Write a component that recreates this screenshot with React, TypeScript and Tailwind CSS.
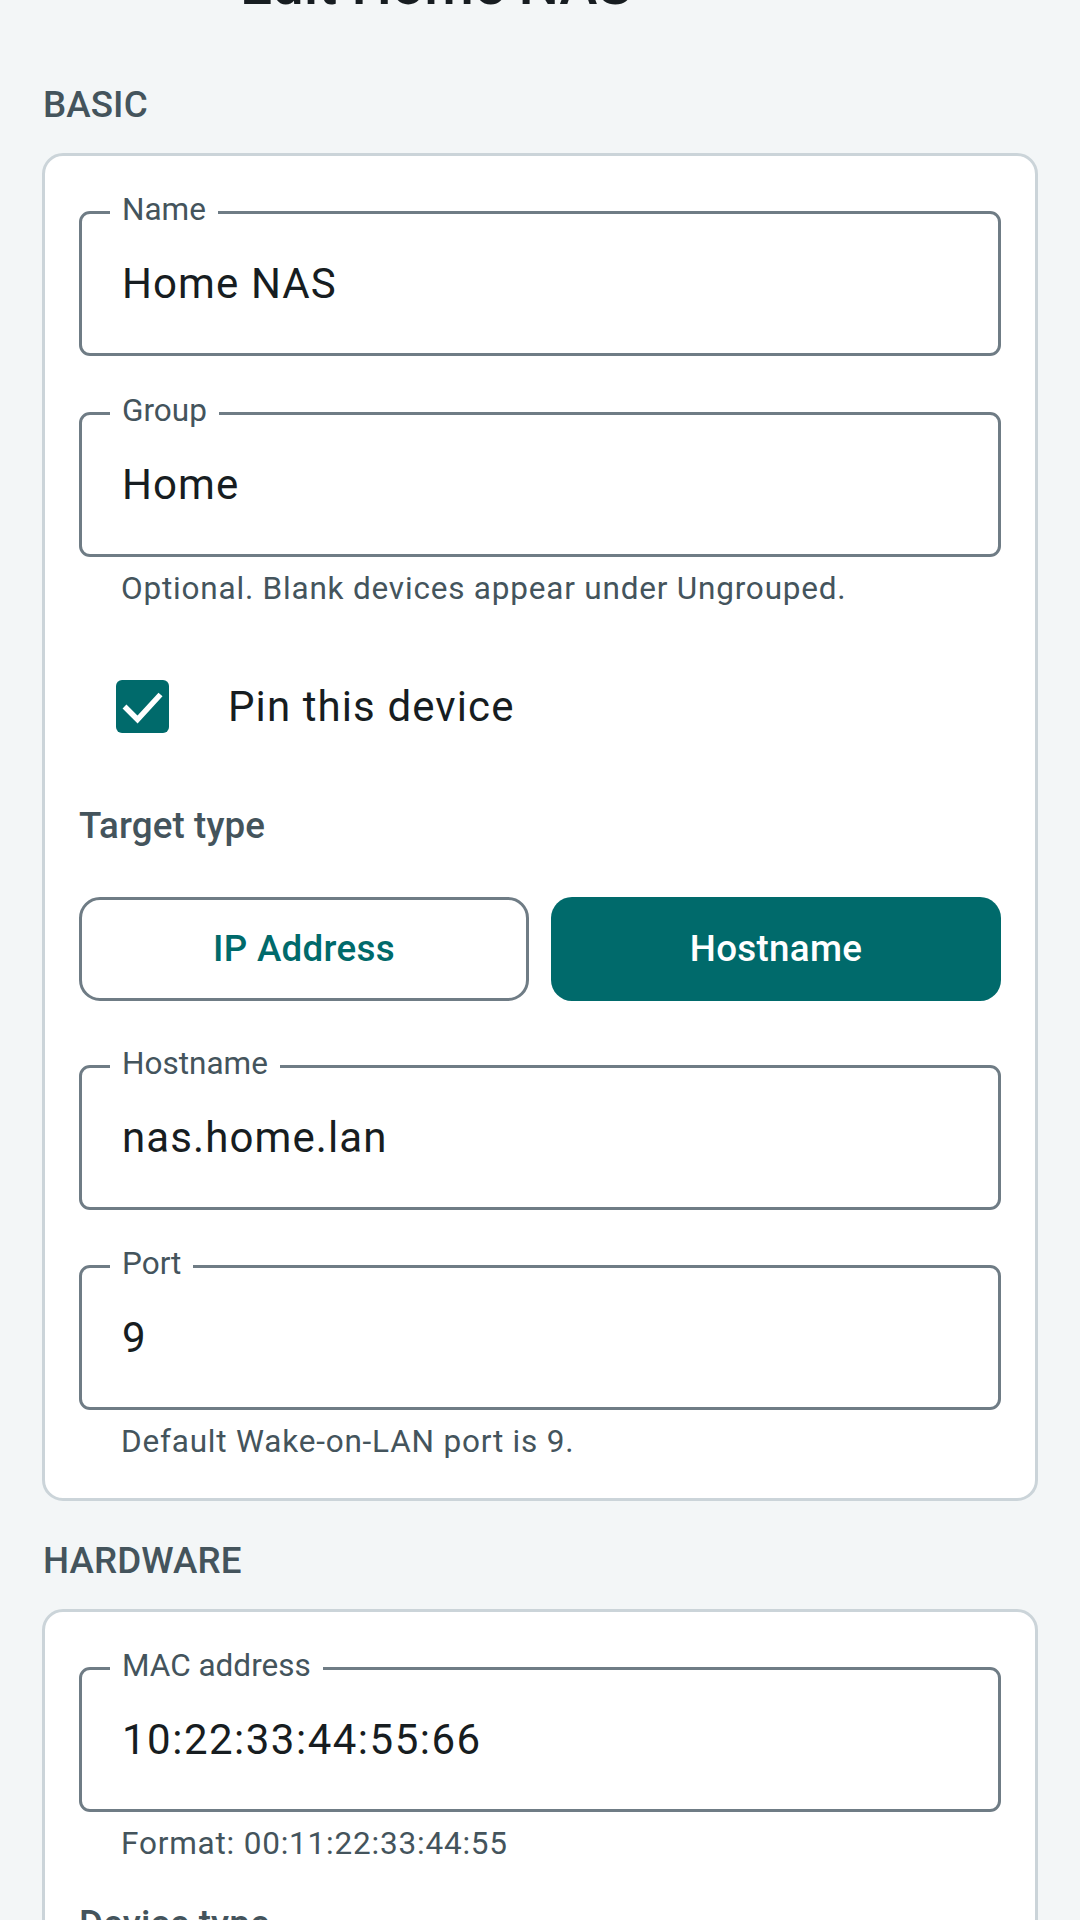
import React from "react";

const Field = ({ label, value, track = "tracking-[1.1px]" }: { label: string; value: string; track?: string }) => (
  <div className="relative h-[145px] rounded-[11px] border-[3px] border-[#6f7c85] flex items-center pl-[40px]">
    <span className="absolute left-[28px] top-[-20px] bg-white px-[12px] text-[31.5px] leading-none text-[#44545c]">
      {label}
    </span>
    <span className={`text-[42px] ${track} text-[#171d21]`}>{value}</span>
  </div>
);

const Helper = ({ children }: { children: React.ReactNode }) => (
  <p className="mt-[11px] pl-[42px] text-[31.5px] leading-[42px] tracking-[0.8px] text-[#44545c]">{children}</p>
);

const SectionTitle = ({ children, className }: { children: React.ReactNode; className: string }) => (
  <h2 className={`ml-[43px] text-[36.75px] leading-[52px] font-medium tracking-[0.1px] text-[#44545c] ${className}`}>
    {children}
  </h2>
);

export default function App() {
  return (
    <div className="h-[1920px] w-[1080px] overflow-hidden bg-[#f3f6f7] font-['Roboto',sans-serif]">
      <div className="h-[20px] overflow-hidden">
        <div className="-mt-[44px] pl-[240px] text-[57px] leading-none font-medium text-[#171d21]">Edit Home NAS</div>
      </div>

      <SectionTitle className="mt-[59px]">BASIC</SectionTitle>

      <div className="mt-[22px] mx-[42px] rounded-[21px] border-[3px] border-[#cbd4d9] bg-white px-[34px] pt-[55px] pb-[35px]">
        <Field label="Name" value="Home NAS" />
        <div className="mt-[56px]">
          <Field label="Group" value="Home" />
        </div>
        <Helper>Optional. Blank devices appear under Ungrouped.</Helper>

        <div className="mt-[33px] flex h-[126px] items-center pl-[37px]">
          <div className="flex h-[53px] w-[53px] items-center justify-center rounded-[6px] bg-[#006a6b]">
            <svg width="53" height="53" viewBox="0 0 53 53">
              <polyline points="8.5,26.5 21.5,39.5 44.5,14.5" fill="none" stroke="#ffffff" strokeWidth="5.5" />
            </svg>
          </div>
          <span className="ml-[59px] text-[42px] tracking-[1.1px] text-[#171d21]">Pin this device</span>
        </div>

        <p className="mt-[31px] text-[36.75px] leading-[52px] font-medium tracking-[0.1px] text-[#44545c]">Target type</p>

        <div className="mt-[45px] grid grid-cols-2 gap-[22px]">
          <div className="flex h-[104px] items-center justify-center rounded-[21px] border-[3px] border-[#6f7c85] text-[36.75px] font-medium tracking-[0.3px] text-[#006a6b]">
            IP Address
          </div>
          <div className="flex h-[104px] items-center justify-center rounded-[21px] bg-[#006a6b] text-[36.75px] font-medium tracking-[0.3px] text-white">
            Hostname
          </div>
        </div>

        <div className="mt-[64px]">
          <Field label="Hostname" value="nas.home.lan" />
        </div>
        <div className="mt-[55px]">
          <Field label="Port" value="9" />
        </div>
        <Helper>Default Wake-on-LAN port is 9.</Helper>
      </div>

      <SectionTitle className="mt-[34px]">HARDWARE</SectionTitle>

      <div className="mt-[22px] mx-[42px] rounded-[21px] border-[3px] border-[#cbd4d9] bg-white px-[34px] pt-[55px] pb-[35px]">
        <Field label="MAC address" value="10:22:33:44:55:66" track="tracking-[1.5px]" />
        <Helper>Format: 00:11:22:33:44:55</Helper>
        <p className="mt-[33px] text-[36.75px] leading-[52px] font-medium tracking-[0.1px] text-[#44545c]">Device type</p>
        <div className="mt-[45px] h-[104px]" />
      </div>
    </div>
  );
}
